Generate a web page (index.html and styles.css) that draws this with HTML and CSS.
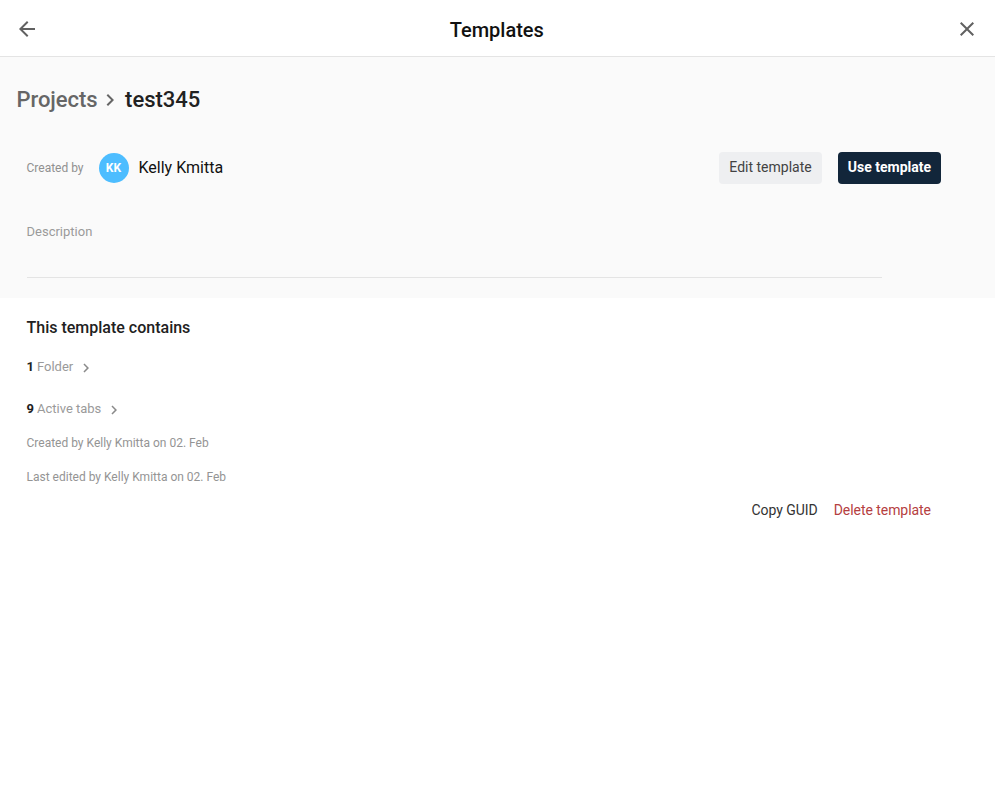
FILE: index.html
```html
<!DOCTYPE html>
<html lang="en">
<head>
    <meta charset="UTF-8">
    <meta name="viewport" content="width=device-width, initial-scale=1.0">
    <title>Templates</title>
    <link rel="stylesheet" href="styles.css">
</head>
<body>

    <header class="topbar">
        <button class="icon-btn" aria-label="Back">
            <svg width="24" height="24" viewBox="0 0 24 24"><path d="M20 11H7.83l5.59-5.59L12 4l-8 8 8 8 1.41-1.41L7.83 13H20z"/></svg>
        </button>
        <h1>Templates</h1>
        <button class="icon-btn" aria-label="Close">
            <svg width="24" height="24" viewBox="0 0 24 24"><path d="M19 6.41 17.59 5 12 10.59 6.41 5 5 6.41 10.59 12 5 17.59 6.41 19 12 13.41 17.59 19 19 17.59 13.41 12z"/></svg>
        </button>
    </header>

    <section class="summary">
        <div class="crumbs">
            <span class="crumb-link">Projects</span>
            <svg class="crumb-sep" width="24" height="24" viewBox="0 0 24 24"><path d="M10 6 8.59 7.41 13.17 12l-4.58 4.59L10 18l6-6z"/></svg>
            <span class="crumb-current">test345</span>
        </div>

        <div class="owner-row">
            <span class="muted-label">Created by</span>
            <span class="avatar">KK</span>
            <span class="owner-name">Kelly Kmitta</span>
            <div class="actions">
                <button class="btn btn-light">Edit template</button>
                <button class="btn btn-dark">Use template</button>
            </div>
        </div>

        <div class="description">Description</div>
    </section>

    <section class="details">
        <h2>This template contains</h2>

        <div class="count-row count-folder">
            <b>1</b> <span>Folder</span>
            <svg class="chev" width="18" height="18" viewBox="0 0 24 24"><path d="M10 6 8.59 7.41 13.17 12l-4.58 4.59L10 18l6-6z"/></svg>
        </div>
        <div class="count-row count-tabs">
            <b>9</b> <span>Active tabs</span>
            <svg class="chev" width="18" height="18" viewBox="0 0 24 24"><path d="M10 6 8.59 7.41 13.17 12l-4.58 4.59L10 18l6-6z"/></svg>
        </div>

        <p class="meta meta-created">Created by Kelly Kmitta on 02. Feb</p>
        <p class="meta meta-edited">Last edited by Kelly Kmitta on 02. Feb</p>

        <div class="footer-links">
            <a class="link">Copy GUID</a>
            <a class="link link-danger">Delete template</a>
        </div>
    </section>

</body>
</html>
```

FILE: styles.css
```css
* {
    box-sizing: border-box;
}

body {
    margin: 0;
    font-family: Roboto, Arial, sans-serif;
    background-color: #fff;
    color: #212121;
}

.topbar {
    height: 57px;
    display: flex;
    align-items: center;
    justify-content: space-between;
    padding: 2px 16.5px 0 15px;
    background-color: #fff;
    border-bottom: 1px solid #e4e4e4;
}

.topbar h1 {
    margin: 2px 0 0;
    font-size: 20px;
    font-weight: 500;
    color: #111;
}

.icon-btn {
    width: 24px;
    height: 24px;
    padding: 0;
    border: 0;
    background: none;
}

.icon-btn svg {
    display: block;
    fill: #616161;
}

.summary {
    height: 241px;
    padding: 27px 0 0 16.5px;
    background-color: #fafafa;
}

.crumbs {
    display: flex;
    align-items: center;
    height: 30px;
    font-size: 22px;
    font-weight: 500;
}

.crumb-link {
    color: #666;
    letter-spacing: -0.05px;
}

.crumb-sep {
    margin: 2px 3.5px 0 0;
    fill: #666;
}

.crumb-current {
    color: #212121;
}

.owner-row {
    display: flex;
    align-items: center;
    height: 32px;
    margin-top: 38px;
    padding-left: 10px;
}

.muted-label {
    width: 72.5px;
    font-size: 12px;
    color: #909090;
}

.avatar {
    width: 30px;
    height: 30px;
    padding-right: 1px;
    border-radius: 50%;
    display: flex;
    align-items: center;
    justify-content: center;
    background-color: #4dbdff;
    color: #fff;
    font-size: 12px;
    font-weight: 700;
}

.owner-name {
    margin-left: 9.5px;
    padding-bottom: 2px;
    font-size: 16px;
    color: #111;
}

.actions {
    display: flex;
    gap: 16px;
    margin-left: auto;
    margin-right: 54px;
}

.btn {
    height: 32px;
    padding: 0 0 2px;
    border: 0;
    border-radius: 4px;
    font-family: inherit;
    font-size: 14px;
}

.btn-light {
    width: 103px;
    background-color: #eeeff1;
    color: #424242;
}

.btn-dark {
    width: 103px;
    background-color: #12263a;
    color: #fff;
    font-weight: 700;
}

.description {
    width: 855px;
    height: 62px;
    margin: 32px 0 0 10px;
    padding-top: 8px;
    font-size: 13px;
    color: #9a9a9a;
    border-bottom: 1px solid #e4e4e4;
}

.details {
    padding: 20px 64px 0 26.5px;
}

.details h2 {
    margin: 0;
    height: 20px;
    font-size: 16px;
    line-height: 20px;
    font-weight: 500;
    color: #212121;
}

.count-row {
    display: flex;
    align-items: center;
    height: 18px;
    font-size: 13px;
    color: #9a9a9a;
}

.count-row b {
    margin-right: 3px;
    font-weight: 700;
    color: #212121;
}

.count-folder {
    margin-top: 19px;
}

.count-tabs {
    margin-top: 24px;
}

.chev {
    margin: 3px 0 0 4px;
    fill: #8a8a8a;
}

.meta {
    margin: 0;
    height: 16px;
    font-size: 12px;
    line-height: 16px;
    color: #949494;
}

.meta-created {
    margin-top: 18px;
}

.meta-edited {
    margin-top: 18px;
}

.footer-links {
    display: flex;
    justify-content: flex-end;
    gap: 16px;
    margin-top: 16px;
    font-size: 14px;
    line-height: 18px;
    letter-spacing: -0.05px;
}

.link {
    color: #333;
}

.link-danger {
    color: #b5403f;
}
```
